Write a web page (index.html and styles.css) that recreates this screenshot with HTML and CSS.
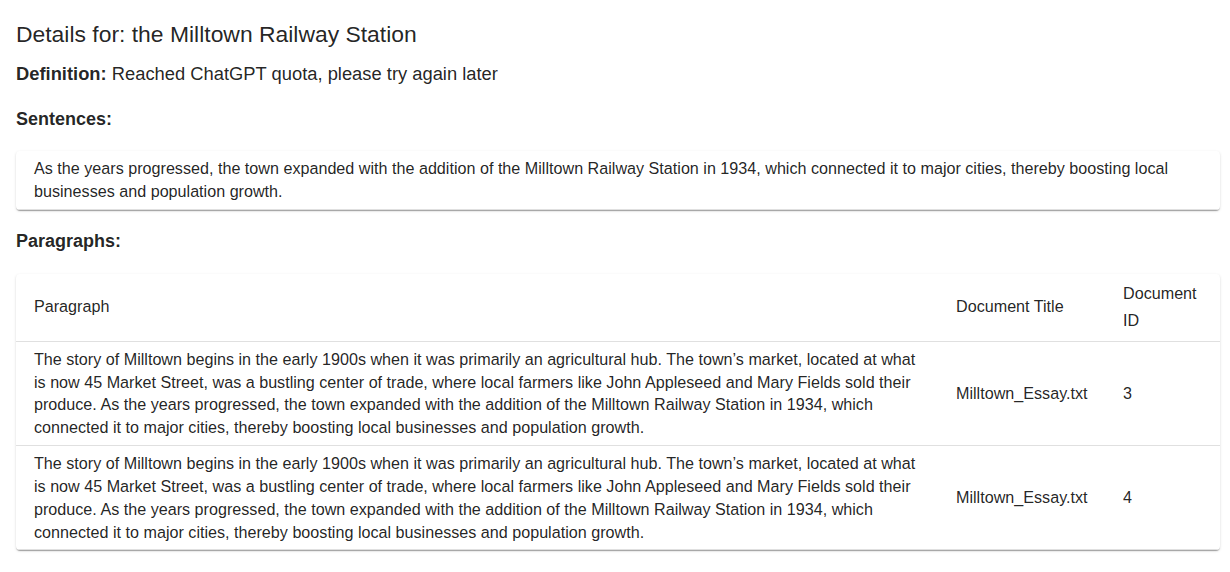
FILE: index.html
```html
<!DOCTYPE html>
<html lang="en">
<head>
<meta charset="utf-8">
<title>Details</title>
<link rel="stylesheet" href="styles.css">
</head>
<body>
<main class="page">
  <h1 class="title">Details for: the Milltown Railway Station</h1>
  <p class="definition"><strong>Definition:</strong> Reached ChatGPT quota, please try again later</p>

  <h2 class="section-heading">Sentences:</h2>
  <div class="paper">
    <table class="table">
      <tbody>
        <tr>
          <td class="cell">As the years progressed, the town expanded with the addition of the Milltown Railway Station in 1934, which connected it to major cities, thereby boosting local businesses and population growth.</td>
        </tr>
      </tbody>
    </table>
  </div>

  <h2 class="section-heading section-heading--second">Paragraphs:</h2>
  <div class="paper">
    <table class="table table--fixed">
      <thead>
        <tr>
          <th class="cell cell--head">Paragraph</th>
          <th class="cell cell--head col-title">Document Title</th>
          <th class="cell cell--head col-id">Document ID</th>
        </tr>
      </thead>
      <tbody>
        <tr>
          <td class="cell">The story of Milltown begins in the early 1900s when it was primarily an agricultural hub. The town’s market, located at what is now 45 Market Street, was a bustling center of trade, where local farmers like John Appleseed and Mary Fields sold their produce. As the years progressed, the town expanded with the addition of the Milltown Railway Station in 1934, which connected it to major cities, thereby boosting local businesses and population growth.</td>
          <td class="cell">Milltown_Essay.txt</td>
          <td class="cell">3</td>
        </tr>
        <tr>
          <td class="cell">The story of Milltown begins in the early 1900s when it was primarily an agricultural hub. The town’s market, located at what is now 45 Market Street, was a bustling center of trade, where local farmers like John Appleseed and Mary Fields sold their produce. As the years progressed, the town expanded with the addition of the Milltown Railway Station in 1934, which connected it to major cities, thereby boosting local businesses and population growth.</td>
          <td class="cell">Milltown_Essay.txt</td>
          <td class="cell">4</td>
        </tr>
      </tbody>
    </table>
  </div>
</main>
</body>
</html>
```

FILE: styles.css
```css
* {
  box-sizing: border-box;
}

html, body {
  margin: 0;
  padding: 0;
  background: #ffffff;
}

body {
  font-family: "Liberation Sans", Arial, sans-serif;
  color: rgba(0, 0, 0, 0.87);
}

.page {
  padding: 18px 10px 20px 16px;
}

.title {
  margin: 0;
  font-size: 22.9px;
  font-weight: 400;
  line-height: 32px;
}

.definition {
  margin: 10px 0 0;
  font-size: 18.35px;
  line-height: 28px;
}

.definition strong {
  font-weight: 700;
}

.section-heading {
  margin: 17px 0 18px;
  font-size: 18px;
  font-weight: 700;
  line-height: 28px;
}

.section-heading--second {
  margin: 17px 0 19px;
}

.paper {
  background: #ffffff;
  border-radius: 4px;
  box-shadow: 0px 2px 1px -1px rgba(0, 0, 0, 0.2),
              0px 1px 1px 0px rgba(0, 0, 0, 0.14),
              0px 1px 3px 0px rgba(0, 0, 0, 0.12);
  overflow: hidden;
}

.table {
  width: 100%;
  border-collapse: collapse;
  border-spacing: 0;
}

.table--fixed {
  table-layout: fixed;
}

.cell {
  padding: 6px 16px 6px 18px;
  font-size: 16.15px;
  font-weight: 400;
  line-height: 22.85px;
  text-align: left;
  vertical-align: middle;
  border-bottom: 1px solid rgb(224, 224, 224);
  color: rgba(0, 0, 0, 0.87);
}

.cell--head {
  line-height: 27.5px;
}

.col-title {
  width: 167px;
}

.col-id {
  width: 115px;
}
```
